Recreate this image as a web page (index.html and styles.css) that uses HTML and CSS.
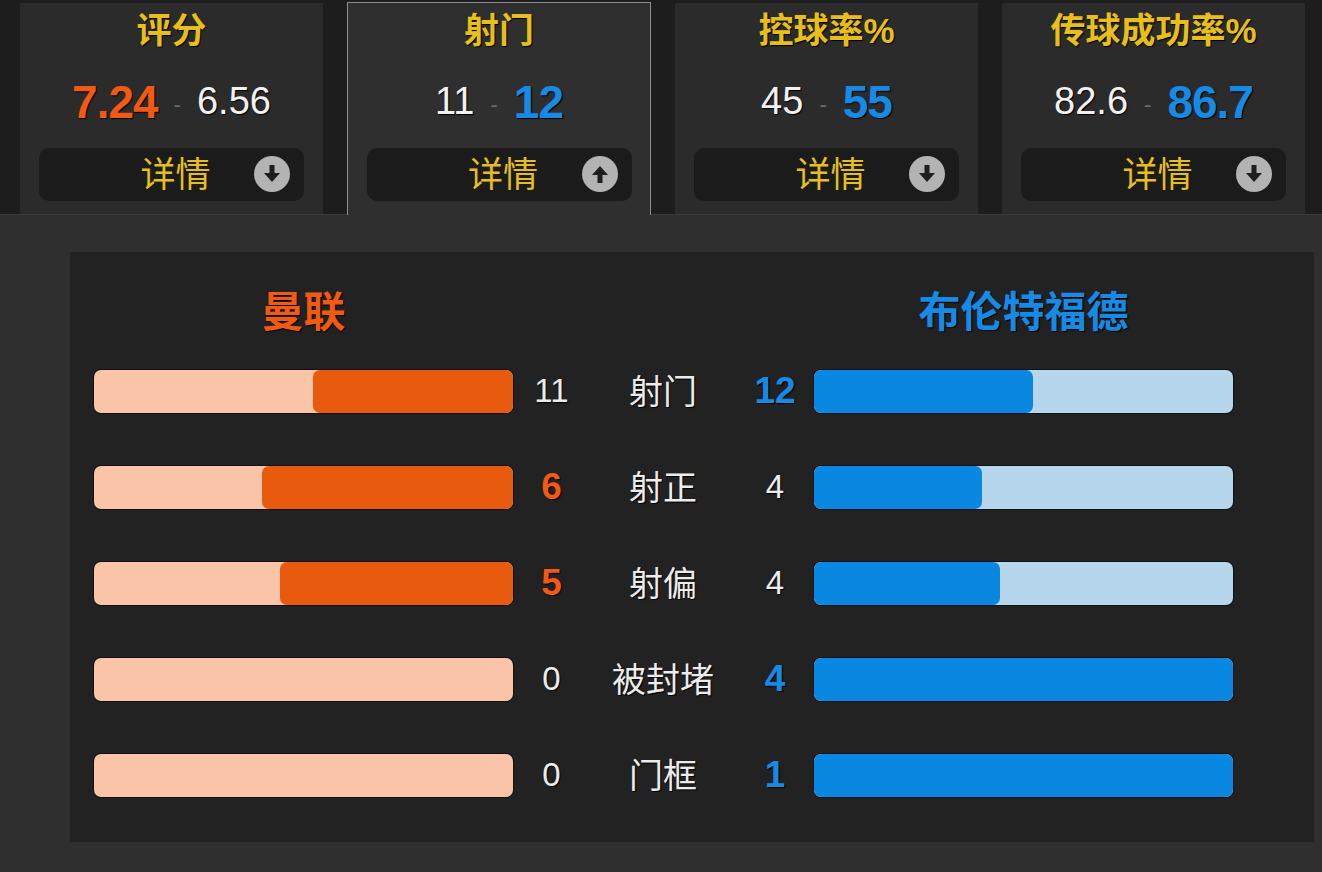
FILE: index.html
```html
<!DOCTYPE html>
<html lang="zh-CN">
<head>
<meta charset="utf-8">
<title>比赛数据</title>
<link rel="stylesheet" href="styles.css">
</head>
<body>
<div class="page">
  <div class="tabs">
    <div class="tab">
      <div class="tab-title">评分</div>
      <div class="tab-values"><span class="val strong home">7.24</span><span class="dash">-</span><span class="val">6.56</span></div>
      <div class="detail"><span class="detail-text">详情</span><span class="arrow"><svg viewBox="0 0 36 36" width="36" height="36"><circle cx="18" cy="18" r="18" fill="#b3b3b3"/><rect x="15.5" y="9" width="5" height="10" fill="#1e1e1e"/><polygon points="10,17 26,17 18,26" fill="#1e1e1e"/></svg></span></div>
    </div>
    <div class="tab active">
      <div class="tab-title">射门</div>
      <div class="tab-values"><span class="val">11</span><span class="dash">-</span><span class="val strong away">12</span></div>
      <div class="detail"><span class="detail-text">详情</span><span class="arrow"><svg viewBox="0 0 36 36" width="36" height="36"><circle cx="18" cy="18" r="18" fill="#b3b3b3"/><rect x="15.5" y="17" width="5" height="10" fill="#1e1e1e"/><polygon points="10,19 26,19 18,10" fill="#1e1e1e"/></svg></span></div>
    </div>
    <div class="tab">
      <div class="tab-title">控球率%</div>
      <div class="tab-values"><span class="val">45</span><span class="dash">-</span><span class="val strong away">55</span></div>
      <div class="detail"><span class="detail-text">详情</span><span class="arrow"><svg viewBox="0 0 36 36" width="36" height="36"><circle cx="18" cy="18" r="18" fill="#b3b3b3"/><rect x="15.5" y="9" width="5" height="10" fill="#1e1e1e"/><polygon points="10,17 26,17 18,26" fill="#1e1e1e"/></svg></span></div>
    </div>
    <div class="tab">
      <div class="tab-title">传球成功率%</div>
      <div class="tab-values"><span class="val">82.6</span><span class="dash">-</span><span class="val strong away">86.7</span></div>
      <div class="detail"><span class="detail-text">详情</span><span class="arrow"><svg viewBox="0 0 36 36" width="36" height="36"><circle cx="18" cy="18" r="18" fill="#b3b3b3"/><rect x="15.5" y="9" width="5" height="10" fill="#1e1e1e"/><polygon points="10,17 26,17 18,26" fill="#1e1e1e"/></svg></span></div>
    </div>
  </div>

  <div class="panel">
    <div class="stats">
      <div class="team team-home">曼联</div>
      <div class="team team-away">布伦特福德</div>

      <div class="bar bar-home"><div class="fill" style="width:47.8%"></div></div>
      <div class="num">11</div>
      <div class="label">射门</div>
      <div class="num strong away">12</div>
      <div class="bar bar-away"><div class="fill" style="width:52.2%"></div></div>

      <div class="bar bar-home"><div class="fill" style="width:60%"></div></div>
      <div class="num strong home">6</div>
      <div class="label">射正</div>
      <div class="num">4</div>
      <div class="bar bar-away"><div class="fill" style="width:40%"></div></div>

      <div class="bar bar-home"><div class="fill" style="width:55.6%"></div></div>
      <div class="num strong home">5</div>
      <div class="label">射偏</div>
      <div class="num">4</div>
      <div class="bar bar-away"><div class="fill" style="width:44.4%"></div></div>

      <div class="bar bar-home"><div class="fill" style="width:0%"></div></div>
      <div class="num">0</div>
      <div class="label">被封堵</div>
      <div class="num strong away">4</div>
      <div class="bar bar-away"><div class="fill" style="width:100%"></div></div>

      <div class="bar bar-home"><div class="fill" style="width:0%"></div></div>
      <div class="num">0</div>
      <div class="label">门框</div>
      <div class="num strong away">1</div>
      <div class="bar bar-away"><div class="fill" style="width:100%"></div></div>
    </div>
  </div>
</div>
</body>
</html>
```

FILE: styles.css
```css
* { box-sizing: border-box; }
html, body {
  margin: 0;
  padding: 0;
  background: #1d1d1d;
  width: 1322px;
  height: 872px;
  overflow: hidden;
  font-family: "Liberation Sans", "Noto Sans CJK SC", sans-serif;
}
.page {
  width: 1322px;
  height: 872px;
  display: flex;
  flex-direction: column;
}
.tabs {
  display: flex;
  gap: 24px;
  padding: 3px 0 0 20px;
  height: 214px;
  flex: none;
}
.tab {
  width: 303px;
  height: 211px;
  background: #2b2b2b;
  display: flex;
  flex-direction: column;
  align-items: center;
  position: relative;
  z-index: 1;
}
.tab.active {
  width: 304px;
  background: #2f2f2f;
  border: 1px solid #8e8e8e;
  border-bottom: none;
  height: 213px;
  margin-top: -1px;
}
.tab-title {
  height: 52px;
  display: flex;
  align-items: center;
  justify-content: center;
  font-size: 35px;
  font-weight: 700;
  color: #e6bf1c;
  text-shadow: 1px 1px 1px #000;
  padding-bottom: 4px;
}
.tab-values {
  height: 93px;
  display: flex;
  align-items: center;
  justify-content: center;
  gap: 16px;
}
.val {
  font-size: 38px;
  color: #f2f2f2;
  text-shadow: 1px 1px 1px #000;
}
.val.strong {
  font-size: 46px;
  font-weight: 700;
  letter-spacing: -1px;
}
.val.home { color: #f05a14; }
.val.away { color: #178ae6; }
.dash {
  font-size: 22px;
  color: #6c6c6c;
  padding-top: 6px;
}
.detail {
  width: 265px;
  height: 53px;
  background: #1b1b1b;
  border-radius: 10px;
  display: flex;
  align-items: center;
  justify-content: center;
  position: relative;
}
.detail-text {
  font-size: 35px;
  color: #e6bf1c;
  padding-left: 8px;
  line-height: 1;
}
.arrow {
  position: absolute;
  right: 14px;
  top: 8px;
  width: 36px;
  height: 36px;
  display: block;
}
.arrow svg { display: block; }

.panel {
  flex: 1;
  background: #2f2f2f;
  border-top: 1px solid #3b3b3b;
  padding: 37px 8px 30px 70px;
}
.stats {
  background: #222222;
  height: 590px;
  display: grid;
  grid-template-columns: 419px 77px 146px 78px 419px;
  grid-template-rows: 61px repeat(5, 96px);
  padding: 30px 0 0 24px;
  align-items: center;
}
.team {
  font-size: 42px;
  font-weight: 700;
  text-align: center;
  text-shadow: 1px 1px 1px #000;
  padding-bottom: 8px;
}
.team-home { grid-column: 1; color: #f05a14; }
.team-away { grid-column: 5; color: #178ae6; }
.bar {
  height: 43px;
  border-radius: 7px;
  display: flex;
  overflow: hidden;
  box-shadow: 0 0 0 1px rgba(0,0,0,0.5);
}
.bar-home {
  background: #fac4a8;
  justify-content: flex-end;
}
.bar-home .fill { background: #e85b0e; }
.bar-away {
  background: #b6d6ee;
  justify-content: flex-start;
}
.bar-away .fill { background: #0a87e0; }
.fill {
  height: 100%;
  border-radius: 7px;
}
.num {
  text-align: center;
  font-size: 33px;
  color: #ececec;
  text-shadow: 1px 1px 1px #000;
}
.num.strong {
  font-size: 37px;
  font-weight: 700;
}
.num.home { color: #f05a14; }
.num.away { color: #178ae6; }
.label {
  text-align: center;
  font-size: 34px;
  color: #ececec;
  text-shadow: 1px 1px 1px #000;
  padding-bottom: 4px;
}
```
